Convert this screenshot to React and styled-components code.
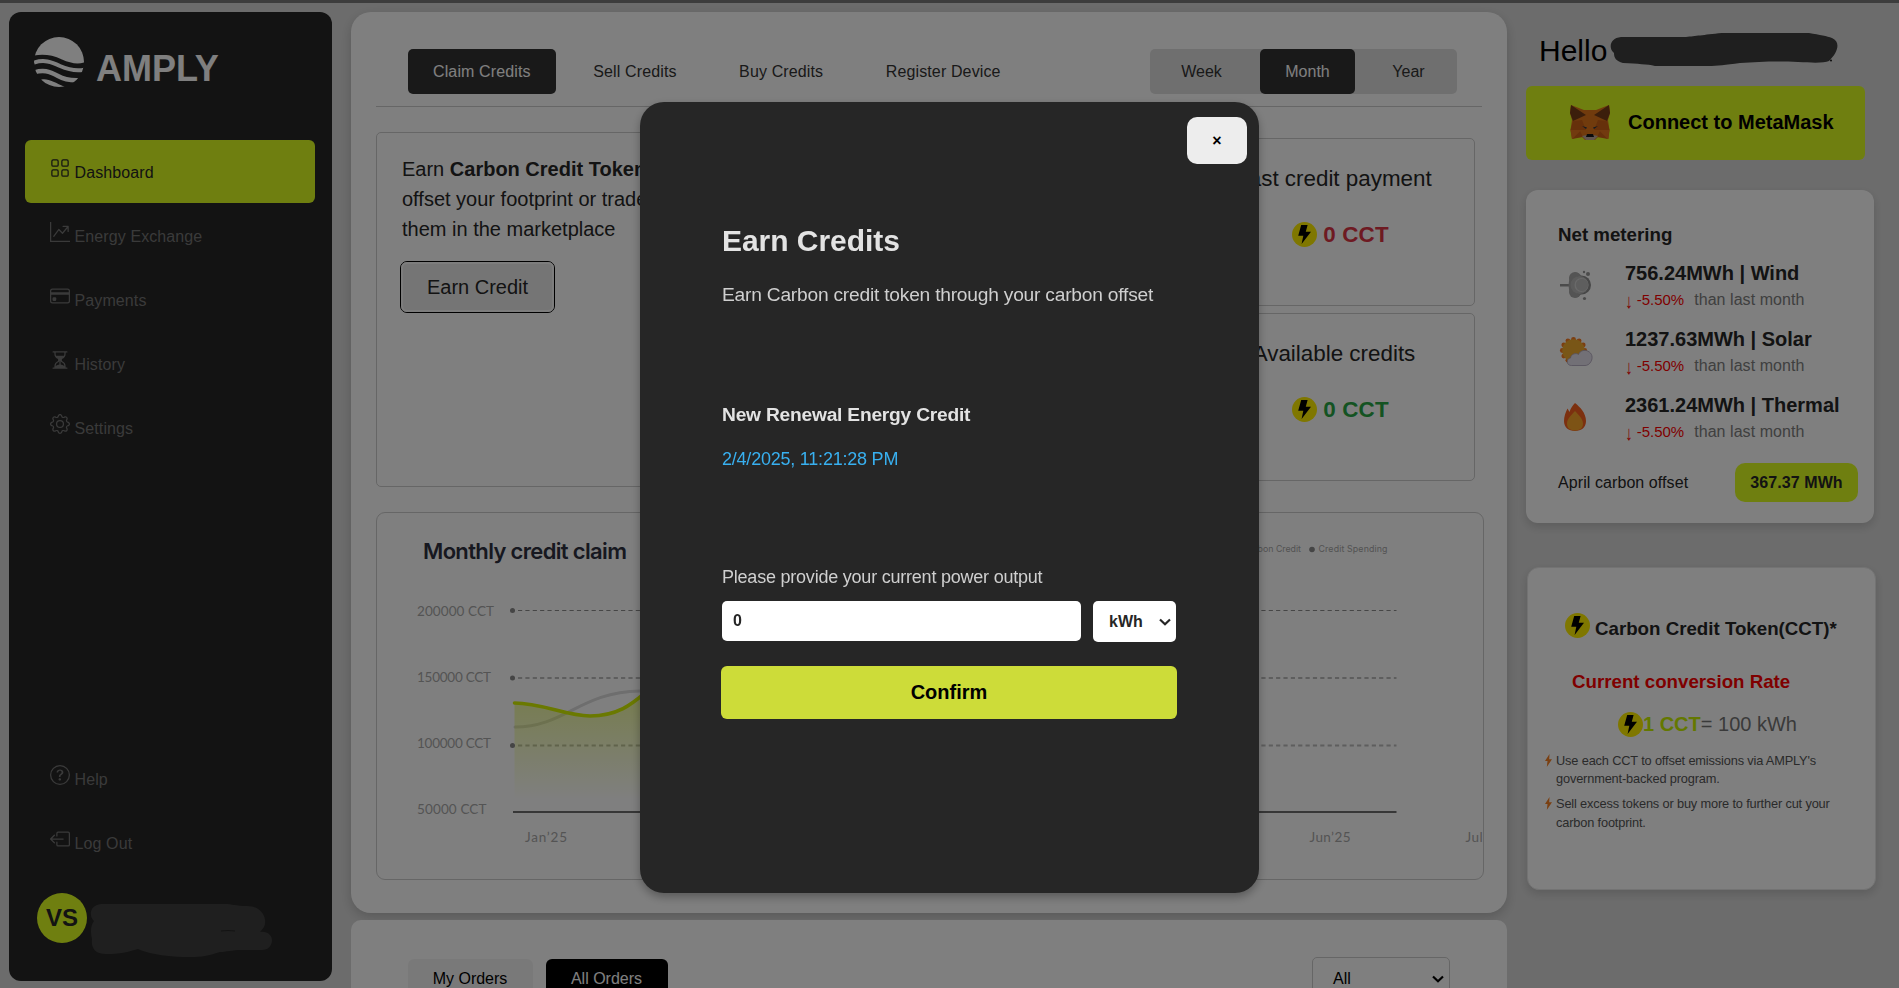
import React from "react";
import styled, { createGlobalStyle } from "styled-components";
import {
  BsGrid,
  BsGraphUpArrow,
  BsCreditCard,
  BsHourglassSplit,
  BsGear,
  BsQuestionCircle,
  BsBoxArrowLeft,
} from "react-icons/bs";

const GlobalStyle = createGlobalStyle`
  * { box-sizing: border-box; }
  html, body { margin: 0; height: 100%; overflow: hidden; }
  body { font-family: "Liberation Sans", Arial, sans-serif; font-size: 16px; color: #262626; background: #d9d9d9; }
  h1, h2, h3, p, ul { margin: 0; padding: 0; }
  button, input { font-family: inherit; }
`;

const Page = styled.div`
  height: 988px;
  overflow: hidden;
  display: flex;
  align-items: flex-start;
  gap: 19px;
  padding: 9px 0 0 9px;
  border-top: 3px solid #7a7a7a;
  background: #d9d9d9;
`;

/* ---------- Sidebar ---------- */
const Sidebar = styled.aside`
  width: 323px;
  height: 969px;
  flex: none;
  display: flex;
  flex-direction: column;
  padding: 25px 17px 38px 16px;
  border-radius: 12px;
  background: #262626;
`;
const Brand = styled.div`
  display: flex;
  gap: 12px;
  height: 50px;
  margin: 0 0 53px 9px;
`;
const BrandName = styled.span`
  padding-top: 7px;
  font-size: 36px;
  font-weight: 700;
  line-height: 50px;
  color: #fff;
`;
const Nav = styled.nav`
  display: flex;
  flex-direction: column;
  gap: 1px;
  margin-top: ${(p) => (p.$bottom ? "auto" : 0)};
`;
const NavItem = styled.a`
  display: block;
  height: 63px;
  padding: 18px 0 0 25px;
  border-radius: 6px;
  line-height: 20px;
  letter-spacing: 0.1px;
  white-space: pre;
  color: ${(p) => (p.$active ? "#262626" : "#757575")};
  background: ${(p) => (p.$active ? "#dfff20" : "transparent")};
  svg { width: 20px; height: 20px; vertical-align: baseline; }
`;
const Profile = styled.div`
  display: flex;
  gap: 3px;
  height: 50px;
  margin: 19px 0 0 12px;
  svg { margin-top: 10px; overflow: visible; }
`;
const Avatar = styled.div`
  width: 50px;
  height: 50px;
  border-radius: 50%;
  background: #dfff20;
  font-size: 24px;
  font-weight: 700;
  line-height: 50px;
  text-align: center;
`;

/* ---------- Main column ---------- */
const Main = styled.main`
  width: 1156px;
  flex: none;
`;
const Panel = styled.section`
  height: 901px;
  padding: 37px 23px 0 25px;
  border-radius: 20px;
  background: #fff;
  box-shadow: 0 4px 12px rgba(0, 0, 0, 0.18);
`;
const Toolbar = styled.div`
  display: flex;
  justify-content: space-between;
  height: 58px;
  margin-right: 2px;
  padding: 0 25px 0 32px;
  border-bottom: 1px solid #ccc;
`;
const Tabs = styled.div`
  display: flex;
  gap: 12.5px;
`;
const Tab = styled.button`
  height: 45px;
  padding: 0 25px;
  border: 0;
  border-radius: 5px;
  font-size: 16px;
  letter-spacing: 0.13px;
  color: ${(p) => (p.$active ? "#fff" : "#333")};
  background: ${(p) => (p.$active ? "#333" : "transparent")};
`;
const Range = styled.div`
  display: grid;
  grid-template-columns: 110px 95px 102px;
  height: 45px;
  border-radius: 5px;
  background: #dfdfdf;
`;
const RangeButton = styled.button`
  border: 0;
  border-radius: 5px;
  padding: 0 ${(p) => (p.$label === "Week" ? 7 : 0)}px 0 ${(p) => (p.$label === "Year" ? 5 : 0)}px;
  font-size: 16px;
  color: ${(p) => (p.$active ? "#fff" : "#333")};
  background: ${(p) => (p.$active ? "#333" : "transparent")};
`;
const CreditRow = styled.div`
  display: flex;
  justify-content: space-between;
  height: 355px;
  margin: 25px 9px 25px 0;
`;
const EarnCard = styled.div`
  width: 400px;
  padding: 21px 25px;
  border: 1px solid #ccc;
  border-radius: 5px;
  p { font-size: 20px; line-height: 30px; white-space: nowrap; }
`;
const EarnButton = styled.button`
  width: 155px;
  height: 52px;
  margin: 17px 0 0 -2px;
  border: 1px solid #000;
  border-radius: 7px;
  outline: 2px solid #fafafa;
  outline-offset: -3px;
  font-size: 20px;
  color: #262626;
  background: #ebebeb;
`;
const StatColumn = styled.div`
  width: 282px;
  padding-top: 6px;
  display: flex;
  flex-direction: column;
  gap: 7px;
`;
const StatCard = styled.div`
  height: 168px;
  flex: none;
  padding-top: 26px;
  border: 1px solid #ccc;
  border-radius: 5px;
  text-align: center;
  font-size: 22.4px;
  line-height: 28px;
`;
const StatValue = styled.div`
  display: flex;
  justify-content: center;
  gap: 6px;
  height: 25px;
  margin: 29px 0 0 13px;
  line-height: 26px;
  letter-spacing: 0.15px;
  font-weight: 700;
  color: ${(p) => p.$color};
`;
const ChartCard = styled.div`
  width: 1108px;
  height: 368px;
  border: 1px solid #ccc;
  border-radius: 9px;
  overflow: hidden;
  svg { display: block; }
`;
const Orders = styled.section`
  display: flex;
  justify-content: space-between;
  height: 120px;
  margin-top: 7px;
  padding: 37px 57px 0;
  border-radius: 10px;
  background: #fff;
`;
const OrderTabs = styled.div`
  display: flex;
  gap: 13px;
  padding-top: 2px;
`;
const OrderTab = styled.button`
  width: ${(p) => (p.$active ? 122 : 125)}px;
  height: 44px;
  padding: 0 1px 5px 0;
  border: 0;
  border-radius: 6px;
  font-size: 16px;
  color: ${(p) => (p.$active ? "#fff" : "#000")};
  background: ${(p) => (p.$active ? "#000" : "#f3f3f3")};
`;
const SelectBox = styled.div`
  display: flex;
  align-items: center;
  justify-content: space-between;
  border: ${(p) => (p.$light ? 0 : "1px solid #ccc")};
  width: ${(p) => (p.$light ? 83 : 138)}px;
  height: ${(p) => (p.$light ? 41 : 44)}px;
  padding: ${(p) => (p.$light ? "1px 5px 0 16px" : "0 5px 1px 20px")};
  border-radius: 5px;
  font-weight: ${(p) => (p.$light ? 700 : 400)};
  color: ${(p) => (p.$light ? "#262626" : "#000")};
  background: #fff;
`;

/* ---------- Right column ---------- */
const Aside = styled.aside`
  width: 350px;
  padding-top: 21px;
`;
const Greeting = styled.h1`
  display: flex;
  height: 36px;
  padding-left: 13px;
  font-size: 30px;
  font-weight: 400;
  line-height: 36px;
  color: #000;
  svg { flex: none; margin-left: 3px; overflow: visible; }
`;
const MetaMaskButton = styled.button`
  display: flex;
  align-items: center;
  gap: 18px;
  width: 339px;
  height: 74px;
  margin-top: 17px;
  padding: 0 0 2px 44px;
  border: 0;
  border-radius: 6px;
  font-size: 20px;
  font-weight: 700;
  color: #000;
  background: #dfff20;
`;
const SideCard = styled.section`
  width: 348px;
  height: 323px;
  margin-top: ${(p) => p.$gap}px;
  border-radius: 12px;
  background: #fff;
  box-shadow: 0 4px 10px rgba(0, 0, 0, 0.15);
`;
const NetCard = styled(SideCard)`
  height: 333px;
  padding: 34px 16px 0 32px;
`;
const CardTitle = styled.h3`
  font-size: 18.72px;
  line-height: 22px;
`;
const MeterRow = styled.div`
  display: grid;
  grid-template-columns: 67px 1fr;
  height: 54px;
  margin-top: ${(p) => (p.$first ? 14 : 12)}px;
  svg { margin: 7px 0 0 0; }
`;
const MeterValue = styled.div`
  font-size: 20px;
  font-weight: 700;
  line-height: 26px;
  white-space: nowrap;
`;
const MeterTrend = styled.div`
  display: flex;
  gap: 10px;
  padding-top: 1px;
  line-height: 26px;
  letter-spacing: 0.05px;
  color: #808080;
`;
const Drop = styled.span`
  font-size: 15px;
  letter-spacing: 0;
  color: #f00;
  white-space: pre;
  i { display: inline-block; font-style: normal; transform: translateY(1px) scaleY(1.35); }
`;
const OffsetRow = styled.div`
  display: flex;
  justify-content: space-between;
  align-items: center;
  margin-top: 17px;
  letter-spacing: 0.08px;
`;
const Pill = styled.div`
  width: 123px;
  height: 39px;
  border-radius: 10px;
  background: #dfff20;
  font-weight: 700;
  line-height: 39px;
  text-align: center;
`;
const TokenCard = styled(SideCard)`
  width: 349px;
  margin-left: 1px;
  padding: 45px 18px 0;
  border: 1px solid #e6e6e6;
`;
const TokenTitle = styled.div`
  display: flex;
  gap: 5px;
  height: 25px;
  padding-left: 19px;
  h3 { padding-top: 5px; white-space: nowrap; }
`;
const RateTitle = styled(CardTitle)`
  margin: 33px 0 0 26px;
  color: #f00;
`;
const Rate = styled.div`
  display: flex;
  height: 25px;
  margin: 19px 0 15px 72px;
  font-size: 20px;
  line-height: 25px;
  color: #757575;
  b { color: #c8f000; }
`;
const Perk = styled.li`
  display: flex;
  gap: 4px;
  margin-bottom: 6.5px;
  font-size: 12.8px;
  line-height: 18.4px;
  letter-spacing: -0.16px;
  color: #555;
  svg { flex: none; margin: 2px 0 0 -1px; }
`;

/* ---------- Modal ---------- */
const Overlay = styled.div`
  position: fixed;
  inset: 0;
  display: flex;
  align-items: flex-start;
  justify-content: center;
  padding-top: 102px;
  background: rgba(0, 0, 0, 0.5);
`;
const Modal = styled.div`
  position: relative;
  width: 619px;
  height: 791px;
  padding: 120px 82px 0;
  border-radius: 24px;
  background: #262626;
  color: #e3e3e3;
  box-shadow: 0 4px 10px rgba(0, 0, 0, 0.3);
`;
const CloseButton = styled.button`
  position: absolute;
  top: 15px;
  right: 12px;
  width: 60px;
  height: 47px;
  padding: 0;
  border: 0;
  border-radius: 10px;
  background: #ededed;
  color: #000;
  font-size: 16px;
  font-weight: 700;
`;
const ModalTitle = styled.h2`
  padding-top: 1px;
  font-size: 30px;
  line-height: 36px;
  letter-spacing: -0.05px;
`;
const ModalText = styled.p`
  margin-top: ${(p) => p.$gap}px;
  font-size: ${(p) => (p.$large ? 19.2 : 18)}px;
  line-height: 22px;
  letter-spacing: -0.22px;
  white-space: nowrap;
  font-weight: ${(p) => (p.$strong ? 700 : 400)};
  color: ${(p) => p.$color || "#cfcfcf"};
`;
const InputRow = styled.div`
  display: flex;
  gap: 12px;
  margin: 13px 0 24px;
`;
const PowerInput = styled.input`
  width: 359px;
  height: 40px;
  padding: 0 11px 0;
  border: 0;
  border-radius: 5px;
  font-size: 16px;
  font-weight: 700;
  color: #262626;
  background: #fff;
`;
const ConfirmButton = styled.button`
  width: 456px;
  height: 53px;
  margin-left: -1px;
  border: 0;
  border-radius: 6px;
  background: #cddc39;
  color: #000;
  font-size: 20px;
  font-weight: 700;
`;

/* ---------- Drawings ---------- */
const Logo = () => (
  <svg width="50" height="50" viewBox="0 0 50 50">
    <clipPath id="disc"><circle cx="25" cy="25" r="25" /></clipPath>
    <g clipPath="url(#disc)">
      <path fill="#fff" d="M0 0H50V25.500C43 27.500 36 26 28 22.500C18 18 10 17 0 18.500Z" />
      <path fill="none" stroke="#fff" strokeWidth="4" d="M0 25.500C10 22.500 17 24.500 26 29C35 33 42 34.500 51 32.500" />
      <path fill="none" stroke="#fff" strokeWidth="4.400" d="M0 35.500C9 32.500 15 34 24 39C31 43 37 44 48 43" />
      <path fill="#fff" d="M4 44C12 39.500 19 45 31 50L20 51Z" />
    </g>
  </svg>
);

const TokenIcon = () => (
  <svg width="25" height="25" viewBox="0 0 25 25">
    <circle cx="12.500" cy="12.500" r="12.500" fill="#fe0" />
    <path fill="#000" d="M9.200 3H15.600L13.800 9.700H19L9.600 22L11.300 13.700H6.200Z" />
  </svg>
);

const Chevron = () => (
  <svg width="12" height="8" viewBox="0 0 12 8" fill="none" stroke="currentColor" strokeWidth="2.200">
    <path d="M1 1.500L6 6.300L11 1.500" />
  </svg>
);

const Fox = () => (
  <svg width="40" height="37" viewBox="0 0 40 37">
    <path fill="#e2761b" d="M1 1L14 6H26L39 1L40 9L38 16L39.500 26L38.500 35L29 32L25 36H15L11 32L2 35L0.500 26L2 16L0 9Z" />
    <path fill="#763d16" d="M1 1L16 11L3 17L0 9ZM39 1L24 11L37 17L40 9Z" />
    <path fill="#cd6116" d="M3 17L12 16L16 26L0.500 26ZM37 17L28 16L24 26L39.500 26ZM2 35L10 27L13 33Z M38 35L30 27L27 33Z" />
    <path fill="#e4751f" d="M0.500 26H11L2 35ZM39.500 26H29L38 35Z" />
    <path fill="#233447" d="M12 22L17 23.500L16 25ZM28 22L23 23.500L24 25Z" />
    <path fill="#c0ad9e" d="M12 32L17 31H23L28 32L24 36H16Z" />
    <path fill="#161616" d="M17 30H23L24 33H16Z" />
  </svg>
);

const WindIcon = () => (
  <svg width="36" height="36" viewBox="0 0 36 36">
    <path fill="#969696" d="M2 17H14V19.500H2Z" />
    <g fill="#a8a8a8">
      <circle cx="17" cy="11" r="6" /><circle cx="17" cy="25" r="6" />
      <ellipse cx="18" cy="18" rx="7.500" ry="12.500" />
    </g>
    <circle cx="23.500" cy="18" r="9.500" fill="#8e8e8e" />
    <circle cx="21.500" cy="18" r="9" fill="#b9b9b9" />
    <circle cx="23.500" cy="18" r="7" fill="#d4d4d4" />
    <circle cx="24" cy="18" r="6.200" fill="#bdbdbd" />
    <circle cx="30" cy="7" r="2" fill="#969696" />
    <circle cx="26" cy="5" r="1.200" fill="#969696" />
    <circle cx="26.500" cy="31.500" r="1.600" fill="#969696" />
  </svg>
);

const SolarIcon = () => (
  <svg width="36" height="36" viewBox="0 0 36 36">
    <g fill="#f97c22">
      {[...Array(12)].map((_, i) => (
        <circle
          key={i}
          cx={15.5 + 11.2 * Math.cos((i * Math.PI) / 6)}
          cy={17.5 + 11.2 * Math.sin((i * Math.PI) / 6)}
          r="2.400"
        />
      ))}
    </g>
    <circle cx="15.500" cy="17.500" r="11.200" fill="#f3ad2e" />
    <path
      fill="#e5e1ec"
      stroke="#aaa0b8"
      strokeWidth=".8"
      d="M13.500 32.500C8 32.500 8 25.500 12.500 25C13 21 18 19.500 20.500 21.500C22 17.500 27 16.500 29.500 18C34.500 20 35 25 33 28.500C31.500 31.500 29 32.500 27 32.500Z"
    />
  </svg>
);

const FireIcon = () => (
  <svg width="36" height="36" viewBox="0 0 36 36">
    <path fill="#f8601f" d="M17 4C22 8 28 14 28 22C28 28.500 23.500 32 17 32C10.500 32 6 28.500 6 22C6 17.500 7.500 13.500 9.500 9.500L11.500 13C12.500 9.500 14.500 6.500 17 4Z" />
    <path fill="#fba62b" d="M17 12C20 15.500 25 19.500 25 24.500C25 29.500 21.500 31.500 17 31.500C12.500 31.500 9 29.500 9 24.500C9 19.500 14 15.500 17 12Z" />
  </svg>
);

const SmallBolt = () => (
  <svg width="7" height="13" viewBox="0 0 7 13">
    <path fill="#f58025" d="M4.500 0L0 7H2.500L1.800 13L7 5.300H4.200Z" />
  </svg>
);

const NameCover = () => (
  <svg width="229" height="36" viewBox="0 0 229 36">
    <path
      fill="#3e3e3e"
      d="M11 4H76C86 3 92 2 112 0H199C210 2 217 3 222 5C231 9 228 19 219 28C214 30 205 30 188 29C165 28 148 29 130 30C115 32 108 33 98 33H45C37 31 28 31 13 30C6 28 4 25 4 20C-2 15 0 5 11 4Z"
    />
    <circle cx="221" cy="27.500" r="0.900" fill="#000" />
  </svg>
);

const AccountCover = () => (
  <svg width="184" height="55" viewBox="0 0 184 55">
    <path
      fill="#3e3e3e"
      d="M11 1H135C142 1 146 3 157 3C172 3 178 16 174 24Q172 27 170 29C178 28 182 33 182 37C182 43 178 47 172 47H152C142 47 136 49 130 49C118 53 112 54 100 54C80 54 70 52 60 50Q52 48 48 46C38 49 30 51 16 51C4 51 1 44 2 36C0 28 1 22 4 18C-1 14 -1 2 11 1Z"
    />
    <path d="M131 28Q138 27 145 28" stroke="#262626" strokeWidth="1" fill="none" />
  </svg>
);

const Chart = () => {
  const rows = [
    ["200000 CCT", 615.7, 610.5, 77],
    ["150000 CCT", 681.7, 678, 74],
    ["100000 CCT", 747.7, 745.500, 74],
    ["50000 CCT", 813.5, null, 69.5],
  ];
  const green = "M514.500 703C542 703 566 716 590 716C618 716 632 704 645 693";
  return (
    <svg width="1106" height="366" viewBox="377 513 1106 366">
      <defs>
        <linearGradient id="area" x1="0" y1="700" x2="0" y2="800" gradientUnits="userSpaceOnUse">
          <stop offset="0" stopColor="#d4f200" stopOpacity=".36" />
          <stop offset="1" stopColor="#d4f200" stopOpacity="0" />
        </linearGradient>
      </defs>
      <text x="423" y="558.500" fontFamily="Inter" fontWeight="600" fontSize="22" fill="#2f3140" textLength="204">
        Monthly credit claim
      </text>
      <g fontFamily="Inter" fontSize="8.800" fill="#a6a6a6">
        <text x="1301" y="552" textAnchor="end">Carbon Credit</text>
        <circle cx="1312" cy="549.500" r="2.800" fill="#8a8a8a" />
        <text x="1318.500" y="552" textLength="69">Credit Spending</text>
      </g>
      {rows.map(([label, base, y, len]) => (
        <g key={label}>
          <text x="417" y={base} fontFamily="Lato" fontSize="13.500" fill="#a8a8a8" textLength={len}>{label}</text>
          {y && <path d={`M518 ${y}H1396.500`} stroke={y < 620 ? "#8c8c8c" : "#bcbcbc"} strokeWidth={y < 620 ? 1 : 1.8} strokeDasharray="4.200 3.160" />}
        </g>
      ))}
      <path d="M515 727C565 727 580 692 640 691L720 691" fill="none" stroke="#dcdcdc" strokeWidth="3" strokeLinecap="round" />
      <path d={`${green}L700 693V800H514.500Z`} fill="url(#area)" />
      <path d={green} fill="none" stroke="#d4f200" strokeWidth="3.600" strokeLinecap="round" />
      {rows.map(([label, , y]) => y && <circle key={label} cx="512.500" cy={y} r="2.500" fill="#8a8a8a" />)}
      <path d="M513 812H1396.500" stroke="#6e6e6e" strokeWidth="2" />
      <g fontFamily="Lato" fontSize="13.500" fill="#a8a8a8">
        <text x="525" y="841.500" textLength="42">Jan’25</text>
        <text x="1309.500" y="841.500" textLength="41">Jun’25</text>
        <text x="1465.500" y="841.500" textLength="37">Jul’25</text>
      </g>
    </svg>
  );
};

const navItems = [
  ["Dashboard", BsGrid],
  ["Energy Exchange", BsGraphUpArrow],
  ["Payments", BsCreditCard],
  ["History", BsHourglassSplit],
  ["Settings", BsGear],
];
const footerItems = [
  ["Help", BsQuestionCircle],
  ["Log Out", BsBoxArrowLeft],
];
const meters = [
  ["756.24MWh | Wind", WindIcon],
  ["1237.63MWh | Solar", SolarIcon],
  ["2361.24MWh | Thermal", FireIcon],
];

export default function App() {
  return (
    <>
      <GlobalStyle />
      <Page>
        <Sidebar>
          <Brand><Logo /><BrandName>AMPLY</BrandName></Brand>
          <Nav>
            {navItems.map(([label, Icon], i) => (
              <NavItem key={label} $active={i === 0}><Icon />{" " + label}</NavItem>
            ))}
          </Nav>
          <Nav $bottom>
            {footerItems.map(([label, Icon]) => (
              <NavItem key={label}><Icon />{" " + label}</NavItem>
            ))}
          </Nav>
          <Profile><Avatar>VS</Avatar><AccountCover /></Profile>
        </Sidebar>

        <Main>
          <Panel>
            <Toolbar>
              <Tabs>
                {["Claim Credits", "Sell Credits", "Buy Credits", "Register Device"].map((t, i) => (
                  <Tab key={t} $active={i === 0}>{t}</Tab>
                ))}
              </Tabs>
              <Range>
                {["Week", "Month", "Year"].map((r) => (
                  <RangeButton key={r} $label={r} $active={r === "Month"}>{r}</RangeButton>
                ))}
              </Range>
            </Toolbar>
            <CreditRow>
              <EarnCard>
                <p>
                  Earn <b>Carbon Credit Tokens</b>
                  <br />offset your footprint or trade
                  <br />them in the marketplace
                </p>
                <EarnButton>Earn Credit</EarnButton>
              </EarnCard>
              <StatColumn>
                <StatCard>
                  Last credit payment
                  <StatValue $color="#dc3545"><TokenIcon />0 CCT</StatValue>
                </StatCard>
                <StatCard>
                  Available credits
                  <StatValue $color="#28a745"><TokenIcon />0 CCT</StatValue>
                </StatCard>
              </StatColumn>
            </CreditRow>
            <ChartCard><Chart /></ChartCard>
          </Panel>
          <Orders>
            <OrderTabs>
              <OrderTab>My Orders</OrderTab>
              <OrderTab $active>All Orders</OrderTab>
            </OrderTabs>
            <SelectBox>All<Chevron /></SelectBox>
          </Orders>
        </Main>

        <Aside>
          <Greeting>Hello<NameCover /></Greeting>
          <MetaMaskButton><Fox />Connect to MetaMask</MetaMaskButton>
          <NetCard $gap={30}>
            <CardTitle>Net metering</CardTitle>
            {meters.map(([value, Icon], i) => (
              <MeterRow key={value} $first={i === 0}>
                <Icon />
                <div>
                  <MeterValue>{value}</MeterValue>
                  <MeterTrend><Drop><i>↓</i> -5.50%</Drop>than last month</MeterTrend>
                </div>
              </MeterRow>
            ))}
            <OffsetRow>April carbon offset<Pill>367.37 MWh</Pill></OffsetRow>
          </NetCard>
          <TokenCard $gap={44}>
            <TokenTitle><TokenIcon /><CardTitle>Carbon Credit Token(CCT)*</CardTitle></TokenTitle>
            <RateTitle>Current conversion Rate</RateTitle>
            <Rate><TokenIcon /><b>1 CCT</b>= 100 kWh</Rate>
            <ul>
              <Perk><SmallBolt /><span>Use each CCT to offset emissions via AMPLY's<br />government-backed program.</span></Perk>
              <Perk><SmallBolt /><span>Sell excess tokens or buy more to further cut your<br />carbon footprint.</span></Perk>
            </ul>
          </TokenCard>
        </Aside>
      </Page>

      <Overlay>
        <Modal>
          <CloseButton>×</CloseButton>
          <ModalTitle>Earn Credits</ModalTitle>
          <ModalText $gap={25} $large>Earn Carbon credit token through your carbon offset</ModalText>
          <ModalText $gap={98} $large $strong $color="#e3e3e3">New Renewal Energy Credit</ModalText>
          <ModalText $gap={22} $color="#38b0f0">2/4/2025, 11:21:28 PM</ModalText>
          <ModalText $gap={96}>Please provide your current power output</ModalText>
          <InputRow>
            <PowerInput defaultValue="0" />
            <SelectBox $light>kWh<Chevron /></SelectBox>
          </InputRow>
          <ConfirmButton>Confirm</ConfirmButton>
        </Modal>
      </Overlay>
    </>
  );
}
